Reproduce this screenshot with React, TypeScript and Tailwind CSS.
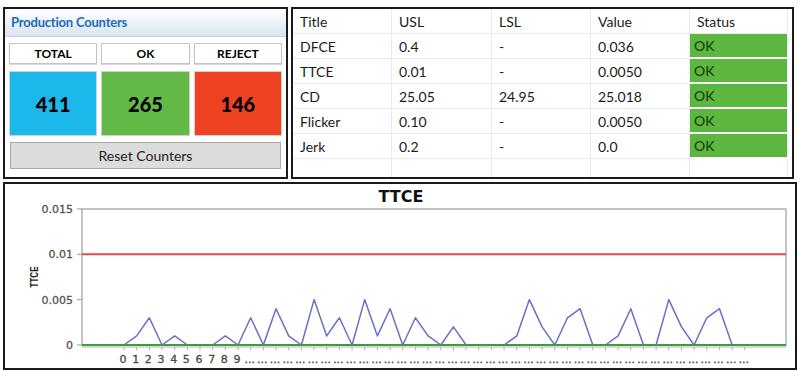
import React from "react";

const counters = [
  { label: "TOTAL", value: 411, color: "bg-[#1cb8ec]" },
  { label: "OK", value: 265, color: "bg-[#63b946]" },
  { label: "REJECT", value: 146, color: "bg-[#ee4223]" },
];

const rows = [
  { title: "DFCE", usl: "0.4", lsl: "-", value: "0.036", status: "OK" },
  { title: "TTCE", usl: "0.01", lsl: "-", value: "0.0050", status: "OK" },
  { title: "CD", usl: "25.05", lsl: "24.95", value: "25.018", status: "OK" },
  { title: "Flicker", usl: "0.10", lsl: "-", value: "0.0050", status: "OK" },
  { title: "Jerk", usl: "0.2", lsl: "-", value: "0.0", status: "OK" },
];

// readings in 0.001 units
const ttce = [
  0, 1, 3, 0, 1, 0, 0, 0, 1, 0, 3, 0, 4, 1, 0, 5, 1, 3, 0, 5, 1, 4, 0, 3, 1,
  0, 2, 0, 0, 0, 0, 1, 5, 2, 0, 3, 4, 0, 0, 1, 4, 0, 0, 5, 2, 0, 3, 4, 0,
];

const px = (i: number) => 124 + i * 12.67;
const py = (v: number) => 345 - v * 9.07;

const ProductionCounters: React.FC = () => (
  <div className="w-[285px] h-[172px] border-2 border-[#1b1b1b] bg-white flex flex-col">
    <div className="h-[28px] shrink-0 bg-gradient-to-b from-white to-[#d9e5f0] border-b border-[#c9d6e2] flex items-center pl-[6px]">
      <span className="text-[13px] font-bold text-[#1d6ab7] tracking-[-0.2px]">Production Counters</span>
    </div>
    <div className="px-[4px] pt-[6px] flex flex-col">
      <div className="grid grid-cols-3 gap-[4px]">
        {counters.map((c) => (
          <div
            key={c.label}
            className="h-[21px] bg-white border border-[#c4c4c4] shadow-[0_1px_1px_rgba(0,0,0,0.15)] flex items-center justify-center text-[12px] font-bold text-black"
          >
            {c.label}
          </div>
        ))}
      </div>
      <div className="grid grid-cols-3 gap-[4px] mt-[7px]">
        {counters.map((c) => (
          <div
            key={c.label}
            className={`h-[65px] ${c.color} border border-[#d0d0d0] flex items-center justify-center text-[20px] font-black text-black`}
          >
            {c.value}
          </div>
        ))}
      </div>
      <button className="mt-[6px] mx-[1px] h-[27px] bg-[#dcdcdc] border border-[#a9a9a9] text-[14px] text-[#222]">
        Reset Counters
      </button>
    </div>
  </div>
);

const cell = "h-[25px] flex items-center px-[7px] border-r border-b border-[#e6ebf0]";

const LimitsTable: React.FC = () => (
  <div className="w-[503px] h-[172px] border-2 border-[#1b1b1b] bg-white">
    <div className="grid grid-cols-[99px_100px_99px_99px_98px] text-[14px] text-[#1a1a1a]">
      {["Title", "USL", "LSL", "Value", "Status"].map((h) => (
        <div key={h} className={`${cell} ${h === "Status" ? "px-[5px]" : ""}`}>
          {h}
        </div>
      ))}
      {rows.map((r) => (
        <React.Fragment key={r.title}>
          <div className={cell}>{r.title}</div>
          <div className={cell}>{r.usl}</div>
          <div className={cell}>{r.lsl}</div>
          <div className={cell}>{r.value}</div>
          <div className="h-[25px] flex items-center px-[4px] bg-[#5db63f] border-b-2 border-white border-r border-r-[#e6ebf0] text-[#14380a]">
            {r.status}
          </div>
        </React.Fragment>
      ))}
      {[0, 1, 2, 3, 4].map((i) => (
        <div key={i} className="h-[18px] border-r border-[#e6ebf0]" />
      ))}
    </div>
  </div>
);

const TtceChart: React.FC = () => {
  const line = ttce.map((v, i) => `${px(i).toFixed(1)},${py(v).toFixed(1)}`).join(" ");
  const yTicks = [
    { v: 15, label: "0.015" },
    { v: 10, label: "0.01" },
    { v: 5, label: "0.005" },
    { v: 0, label: "0" },
  ];
  return (
    <div className="w-[794px] h-[188px] mt-[3px] border-2 border-[#1b1b1b] bg-white">
      <svg width="790" height="184" className="block">
        <g transform="translate(-5,-184)" fontFamily="'DejaVu Sans', Verdana, sans-serif">
          <text x="401" y="202" textAnchor="middle" fontSize="16" fontWeight="bold" fill="#111">
            TTCE
          </text>
          {/* plot frame */}
          <rect x="82" y="209" width="704" height="136" fill="#fff" stroke="#8a8a8a" strokeWidth="1" />
          <line x1="82" y1="347" x2="786" y2="347" stroke="#b5b5b5" strokeWidth="1" />
          {yTicks.map((t) => (
            <g key={t.label}>
              <line x1="77" y1={py(t.v)} x2="82" y2={py(t.v)} stroke="#999" strokeWidth="1" />
              <text
                x="73"
                y={py(t.v) + 4}
                textAnchor="end"
                fontSize="11"
                fill="#555"
                stroke="#555"
                strokeWidth="0.3"
              >
                {t.label}
              </text>
            </g>
          ))}
          <text
            transform="translate(38,277) rotate(-90)"
            textAnchor="middle"
            fontSize="10"
            fontWeight="bold"
            fill="#222"
            fontFamily="'Liberation Sans', Arial, sans-serif"
            textLength="21"
            lengthAdjust="spacingAndGlyphs"
          >
            TTCE
          </text>
          {ttce.concat([0]).map((_, i) => (
            <line key={i} x1={px(i)} y1="347" x2={px(i)} y2="350" stroke="#aaa" strokeWidth="1" />
          ))}
          <polyline points={line} fill="none" stroke="#6a6fc8" strokeWidth="1.5" strokeLinejoin="round" />
          <line x1="82" y1="254.3" x2="786" y2="254.3" stroke="#e84848" strokeWidth="2" />
          <line x1="82" y1="345" x2="786" y2="345" stroke="#3d9a3d" strokeWidth="2" />
          {Array.from({ length: 50 }).map((_, i) => (
            <text
              key={i}
              x={px(i) - 1}
              y="363"
              textAnchor="middle"
              fontSize="11"
              fill="#4a4a4a"
              stroke="#4a4a4a"
              strokeWidth="0.3"
            >
              {i < 10 ? String(i) : "..."}
            </text>
          ))}
        </g>
      </svg>
    </div>
  );
};

export default function App() {
  return (
    <div className="w-[800px] h-[375px] bg-white pt-[7px] px-[3px] font-['Lato','Liberation_Sans',sans-serif]">
      <div className="flex gap-[3px]">
        <ProductionCounters />
        <LimitsTable />
      </div>
      <TtceChart />
    </div>
  );
}
